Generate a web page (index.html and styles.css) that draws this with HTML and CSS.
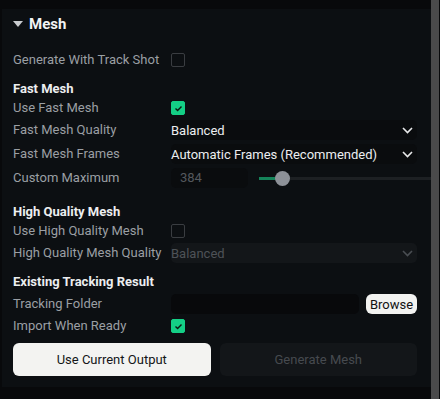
FILE: index.html
```html
<!DOCTYPE html>
<html>
<head>
<meta charset="utf-8">
<link rel="stylesheet" href="styles.css">
</head>
<body>
<div class="layout">
  <div class="main">
    <div class="panel">
      <div class="header">
        <svg class="tri" width="10" height="7" viewBox="0 0 10 7"><path d="M0 0H10L5 6Z" fill="#c9cbce"/></svg>
        <span>Mesh</span>
      </div>
      <div class="row first">
        <div class="label">Generate With Track Shot</div>
        <div class="ctl"><span class="cb"></span></div>
      </div>
      <div class="section">Fast Mesh</div>
      <div class="row r-cb">
        <div class="label">Use Fast Mesh</div>
        <div class="ctl"><span class="cb on"><svg width="9" height="7" viewBox="0 0 9 7"><path d="M1.5 3.6L3.6 5.6L7.5 1.5" fill="none" stroke="#0b1a12" stroke-width="1.4"/></svg></span></div>
      </div>
      <div class="row">
        <div class="label">Fast Mesh Quality</div>
        <div class="select"><span>Balanced</span><svg width="11" height="7" viewBox="0 0 11 7"><path d="M1 1L5.5 5.5L10 1" fill="none" stroke="#e8e9ea" stroke-width="1.6"/></svg></div>
      </div>
      <div class="row">
        <div class="label">Fast Mesh Frames</div>
        <div class="select"><span>Automatic Frames (Recommended)</span><svg width="11" height="7" viewBox="0 0 11 7"><path d="M1 1L5.5 5.5L10 1" fill="none" stroke="#e8e9ea" stroke-width="1.6"/></svg></div>
      </div>
      <div class="row">
        <div class="label">Custom Maximum</div>
        <div class="ctl slider-row">
          <div class="num">384</div>
          <div class="slider"><div class="fill"></div><div class="knob"></div></div>
        </div>
      </div>
      <div class="section s2">High Quality Mesh</div>
      <div class="row r-cb">
        <div class="label">Use High Quality Mesh</div>
        <div class="ctl"><span class="cb"></span></div>
      </div>
      <div class="row">
        <div class="label">High Quality Mesh Quality</div>
        <div class="select dis"><span>Balanced</span><svg width="11" height="7" viewBox="0 0 11 7"><path d="M1 1L5.5 5.5L10 1" fill="none" stroke="#4a4e53" stroke-width="1.6"/></svg></div>
      </div>
      <div class="section s3">Existing Tracking Result</div>
      <div class="row folder-row">
        <div class="label">Tracking Folder</div>
        <div class="ctl folder">
          <div class="path"></div>
          <button class="browse">Browse</button>
        </div>
      </div>
      <div class="row r-cb">
        <div class="label">Import When Ready</div>
        <div class="ctl"><span class="cb on"><svg width="9" height="7" viewBox="0 0 9 7"><path d="M1.5 3.6L3.6 5.6L7.5 1.5" fill="none" stroke="#0b1a12" stroke-width="1.4"/></svg></span></div>
      </div>
      <div class="actions">
        <button class="btn primary">Use Current Output</button>
        <button class="btn disabled">Generate Mesh</button>
      </div>
    </div>
  </div>
  <div class="scrollbar"></div>
</div>
</body>
</html>
```
FILE: styles.css
```css
* { box-sizing: border-box; }
html, body { margin: 0; padding: 0; }
body {
  background: #08090b;
  font-family: Roboto, "Liberation Sans", sans-serif;
  font-size: 13px;
  color: #9b9fa4;
  width: 440px;
  height: 399px;
  overflow: hidden;
}
.layout { display: flex; height: 399px; }
.main { width: 431px; padding: 9px 0 0 2px; }
.scrollbar { width: 8px; background: #4a4a4b; height: 399px; }
.panel {
  background: #0c0f12;
  height: 378px;
  padding: 0 0 0 11px;
}
.header {
  display: flex;
  align-items: center;
  height: 28px;
  padding-top: 1px;
  gap: 6px;
  color: #f2f3f4;
  font-weight: 700;
  font-size: 15px;
}
.header .tri { margin-top: 1px; }
.row {
  display: grid;
  grid-template-columns: 158px 246px;
  align-items: center;
  height: 24px;
}
.row.first { margin-top: 11px; height: 24px; }
.row.r-cb { height: 20px; }
.row.folder-row { margin-top: 1px; }
.label { white-space: nowrap; line-height: 16px; }
.ctl { display: flex; align-items: center; }
.cb {
  width: 14px; height: 14px;
  border: 1px solid #3a3d41;
  border-radius: 2px;
  display: flex; align-items: center; justify-content: center;
}
.cb.on { background: #14cf86; border-color: #14cf86; }
.section {
  color: #eceef0;
  font-weight: 700;
  font-size: 13px;
  height: 18px;
  line-height: 18px;
  margin-top: 8px;
}
.s2 { margin-top: 13px; }
.s3 { margin-top: 8px; }
.select {
  height: 20px;
  background: #0a0c0e;
  border-radius: 5px;
  display: flex;
  align-items: center;
  justify-content: space-between;
  padding: 0 4px 0 0;
  color: #eceef0;
}
.select.dis { background: #131619; color: #4e5257; }
.slider-row { gap: 11px; }
.num {
  width: 77px; height: 20px;
  background: #0a0c0e;
  border-radius: 5px;
  color: #54585d;
  padding-left: 9px;
  line-height: 20px;
}
.slider {
  position: relative;
  flex: 1;
  height: 3px;
  background: #1d2023;
  margin-right: -14px;
}
.fill { width: 23px; height: 3px; background: #15845a; }
.knob {
  position: absolute;
  left: 16px; top: -6px;
  width: 15px; height: 15px;
  border-radius: 50%;
  background: #8d9198;
}
.folder { gap: 7px; }
.path { width: 188px; height: 20px; background: #08090b; border-radius: 5px; }
.browse {
  width: 51px; height: 20px;
  background: #f2f2f0;
  border: none;
  border-radius: 6px;
  font-family: Roboto, "Liberation Sans", sans-serif;
  font-size: 13px;
  color: #111;
  padding: 0;
}
.actions {
  display: flex;
  gap: 9px;
  margin-top: 7px;
  width: 404px;
}
.btn {
  flex: 1;
  height: 33px;
  border: none;
  border-radius: 6px;
  font-family: Roboto, "Liberation Sans", sans-serif;
  font-size: 13px;
  padding: 0;
}
.primary { background: #f3f3f1; color: #141618; }
.disabled { background: #131619; color: #464a4f; }
```
